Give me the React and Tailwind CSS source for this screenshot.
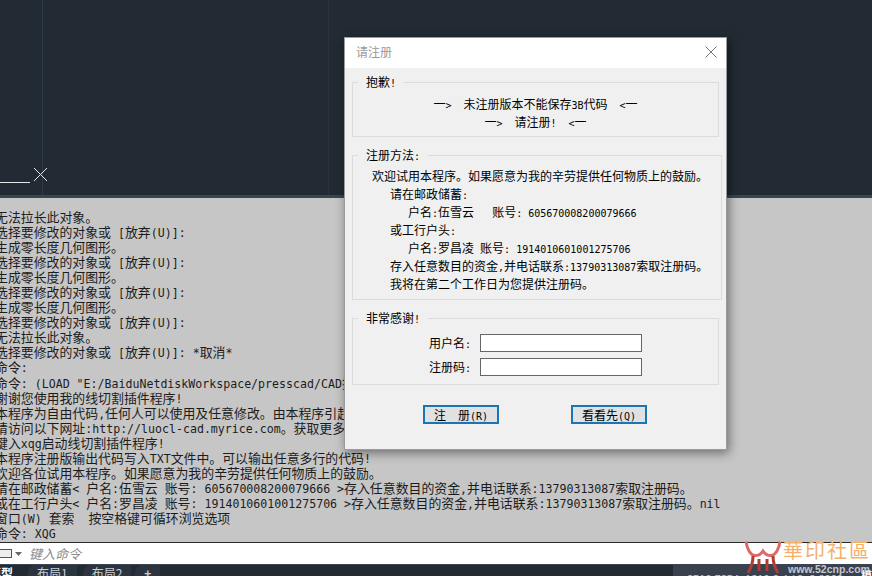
import React from 'react';

const cjk = '"Noto Sans CJK SC", sans-serif';
const mono10 = "font-['DejaVu_Sans_Mono'] text-[10px] leading-none";

// 日志里中文是双宽，西文是单宽，所以分开设字号
const Mixed = ({ text, latin, han }) => {
  const parts = text.split(/([\u0020-\u007e]+)/).filter(Boolean);
  return parts.map((p, i) => (
    <span key={i} className={/^[\u0020-\u007e]/.test(p) ? latin : han}>{p}</span>
  ));
};

const logLines = [
  '无法拉长此对象。',
  '选择要修改的对象或 [放弃(U)]:',
  '生成零长度几何图形。',
  '选择要修改的对象或 [放弃(U)]:',
  '生成零长度几何图形。',
  '选择要修改的对象或 [放弃(U)]:',
  '生成零长度几何图形。',
  '选择要修改的对象或 [放弃(U)]:',
  '无法拉长此对象。',
  '选择要修改的对象或 [放弃(U)]: *取消*',
  '命令:',
  '命令: (LOAD "E:/BaiduNetdiskWorkspace/presscad/CAD插件/线切割.lsp")',
  '谢谢您使用我的线切割插件程序!',
  '本程序为自由代码,任何人可以使用及任意修改。由本程序引起的任何后果与作者无关。',
  '请访问以下网址:http://luocl-cad.myrice.com。获取更多信息。',
  '键入xqg启动线切割插件程序!',
  '本程序注册版输出代码写入TXT文件中。可以输出任意多行的代码!',
  '欢迎各位试用本程序。如果愿意为我的辛劳提供任何物质上的鼓励。',
  '请在邮政储蓄< 户名:伍雪云 账号: 605670008200079666 >存入任意数目的资金,并电话联系:13790313087索取注册码。',
  '或在工行户头< 户名:罗昌凌 账号: 1914010601001275706 >存入任意数目的资金,并电话联系:13790313087索取注册码。nil',
  '窗口(W) 套索  按空格键可循环浏览选项',
  '命令: XQG',
];

const GroupBox = ({ title, className, children }) => (
  <fieldset className={`border border-[#dcdcdc] mx-[7px] px-[13px] ${className}`}>
    <legend className="-ml-2 px-2 text-[12px] leading-[14px] text-black">
      <Mixed text={title} latin={mono10} han="" />
    </legend>
    {children}
  </fieldset>
);

const DialogButton = ({ text }) => (
  <button className="w-[76px] h-[19px] border-2 border-[#1b74b6] bg-[#e1e1e1] text-[12px] leading-[14px] text-black flex items-center justify-center whitespace-pre">
    <span><Mixed text={text} latin={mono10} han="" /></span>
  </button>
);

const InfoLine = ({ text, className }) => (
  <div className={`h-[18px] ${className}`}>
    <Mixed text={text} latin={mono10} han="" />
  </div>
);

const RegisterDialog = () => (
  <div
    className="absolute left-[344px] top-[37px] w-[383px] h-[413px] bg-[#f0f0f0] border border-[#9a9a9a] shadow-[2px_3px_10px_rgba(0,0,0,0.45)] flex flex-col"
    style={{ fontFamily: cjk }}
  >
    <div className="h-[30px] shrink-0 bg-white flex items-center justify-between pl-[11px] pr-[9px] pb-[2px]">
      <span className="text-[12px] text-[#999999]">请注册</span>
      <svg width="12" height="12" viewBox="0 0 12 12" className="text-[#777777]">
        <path d="M0.5 0.5 L11.5 11.5 M11.5 0.5 L0.5 11.5" stroke="currentColor" fill="none" />
      </svg>
    </div>
    <GroupBox title="抱歉!" className="mt-[7px] h-[62px]">
      <div className="text-center text-[12px] leading-[18px] text-black pt-[6px] whitespace-pre">
        <InfoLine text="一>  未注册版本不能保存3B代码  <一" />
        <InfoLine text="一>  请注册!  <一" />
      </div>
    </GroupBox>
    <GroupBox title="注册方法:" className="mt-[11px] h-[152px]">
      <div className="text-[12px] leading-[18px] text-black whitespace-pre pl-[6px] pt-[5px]">
        <InfoLine text="欢迎试用本程序。如果愿意为我的辛劳提供任何物质上的鼓励。" />
        <InfoLine text="请在邮政储蓄:" className="pl-[18px]" />
        <InfoLine text="户名:伍雪云   账号: 605670008200079666" className="pl-[36px]" />
        <InfoLine text="或工行户头:" className="pl-[18px]" />
        <InfoLine text="户名:罗昌凌 账号: 1914010601001275706" className="pl-[36px]" />
        <InfoLine text="存入任意数目的资金,并电话联系:13790313087索取注册码。" className="pl-[18px]" />
        <InfoLine text="我将在第二个工作日为您提供注册码。" className="pl-[18px]" />
      </div>
    </GroupBox>
    <GroupBox title="非常感谢!" className="mt-[11px] h-[74px]">
      <div className="flex flex-col gap-[6px] pt-[9px] pl-[63px] text-[12px] text-black">
        <label className="flex items-center gap-[9px]">
          <span className="w-[42px] whitespace-pre"><Mixed text="用户名:" latin={mono10} han="" /></span>
          <input className="w-[162px] h-[18px] bg-white border border-[#666666]" />
        </label>
        <label className="flex items-center gap-[9px]">
          <span className="w-[42px] whitespace-pre"><Mixed text="注册码:" latin={mono10} han="" /></span>
          <input className="w-[162px] h-[18px] bg-white border border-[#666666]" />
        </label>
      </div>
    </GroupBox>
    <div className="flex pl-[78px] gap-[72px] mt-[20px]">
      <DialogButton text="注  册(R)" />
      <DialogButton text="看看先(Q)" />
    </div>
  </div>
);

const Watermark = () => (
  <div className="absolute left-[742px] top-[540px] w-[130px] h-[36px] pointer-events-none">
    <svg width="40" height="34" viewBox="0 0 40 34" className="absolute left-0 top-0" fill="none">
      <path d="M4 1.5 C5 8 8 14 12 15.5 C16 16 19 14 21 11 C23 14 26 16 30 15.5 C34 14 37 8 38 1.5" stroke="#de6a63" strokeWidth="3" />
      <path d="M11 16 C11 22 9 28 6 33 M31 16 C31 22 33 28 36 33" stroke="#b23b36" strokeWidth="3" />
      <path d="M17 19 V31 M25 19 V31" stroke="#b23b36" strokeWidth="3" />
    </svg>
    <div className="absolute left-[41px] top-[-2px] text-[20px] leading-[24px] tracking-[2px] text-[#f4b06a] whitespace-nowrap" style={{ fontFamily: cjk }}>華印社區</div>
    <div className="absolute left-[46px] top-[23px] text-[10.5px] leading-[12px] font-['Liberation_Sans'] font-bold text-[#c4c8cd] whitespace-nowrap">www.52cnp.com</div>
  </div>
);

export default function App() {
  return (
    <div className="relative w-[872px] h-[576px] overflow-hidden bg-[#222a33] flex flex-col">
      {/* 绘图区 */}
      <div className="relative h-[195px] shrink-0 bg-[#222a33] overflow-hidden">
        <div className="absolute left-[42px] top-0 w-px h-full bg-[#2f3947]" />
        <div className="absolute left-[328px] top-0 w-px h-full bg-[#2a323d]" />
        <svg width="50" height="20" viewBox="0 0 50 20" className="absolute left-0 top-[166px]" fill="none">
          <path d="M0 16.5 H30" stroke="#e4e6e8" />
          <path d="M34 2 L47 15 M47 2 L34 15" stroke="#e4e6e8" />
        </svg>
      </div>
      <div className="h-[3px] shrink-0 bg-[#3b4452]" />

      {/* 命令行历史 */}
      <div className="h-[344px] shrink-0 bg-[#c6c6c6] overflow-hidden pt-[10px] -ml-[5px] text-[#1c1c1c]" style={{ fontFamily: cjk }}>
        {logLines.map((line, i) => (
          <div key={i} className="h-[15.05px] leading-[15px] whitespace-pre">
            <Mixed text={line} latin="font-['DejaVu_Sans_Mono'] text-[11.6px]" han="text-[12.9px]" />
          </div>
        ))}
      </div>

      {/* 命令输入 */}
      <div className="h-[22px] shrink-0 bg-white border-t border-[#2a2a2a] flex items-center -ml-[3px]">
        <div className="w-[15px] h-[9px] border border-[#555555] bg-[#eeeeee]" />
        <svg width="7" height="4" viewBox="0 0 7 4" className="ml-[3px]"><path d="M0 0 H7 L3.5 4 Z" fill="#666666" /></svg>
        <span className="ml-[7px] text-[13px] italic text-[#8a8a8a]" style={{ fontFamily: cjk }}>键入命令</span>
      </div>

      {/* 状态栏 */}
      <div className="flex-1 bg-[#222a33] border-t border-[#3b4452] flex items-start overflow-hidden text-[#c9ced4] text-[12px] leading-[16px]" style={{ fontFamily: cjk }}>
        <span className="text-white font-bold -ml-[11px]">模型</span>
        <span className="ml-[15px] px-[9px] h-full bg-[#2c3440] rounded-tl-lg">布局1</span>
        <span className="ml-[6px] px-[9px] h-full bg-[#2c3440] rounded-tl-lg">布局2</span>
        <span className="ml-[4px] px-[9px] h-full bg-[#2c3440] rounded-tl-lg font-bold">+</span>
        <div className="ml-auto w-[199px] h-full bg-[#39414f] pl-[14px] pt-[5px] font-['Liberation_Sans'] text-[11px] whitespace-nowrap">
          2516.7354, 1219.2 4 / 0, 0.0000
          <span className="ml-[18px] text-white font-bold relative -top-[3px]" style={{ fontFamily: cjk }}>模型</span>
        </div>
      </div>

      <RegisterDialog />
      <Watermark />
    </div>
  );
}
